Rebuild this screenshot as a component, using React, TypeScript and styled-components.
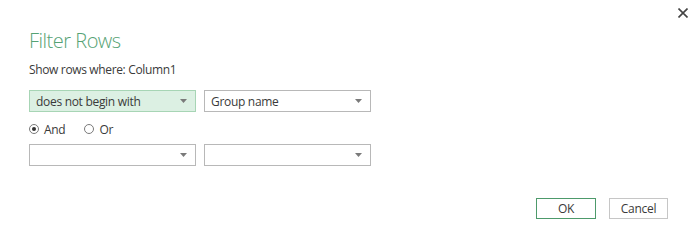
import styled, { createGlobalStyle } from 'styled-components';

const GlobalStyle = createGlobalStyle`
	html, body {
		margin: 0;
		padding: 0;
		background: #ffffff;
	}
	body {
		font-family: 'Open Sans', 'Noto Sans', sans-serif;
		color: #333333;
	}
`;

const Arrow = () => (
	<svg width="7" height="4" viewBox="0 0 7 4">
		<path d="M0 0 L7 0 L3.5 4 Z" fill="#7a7a7a" />
	</svg>
);

const Select = (props: { value?: string; active?: boolean }) => (
	<SelectBox $active={!!props.active}>
		<SelectText>{props.value}</SelectText>
		<Arrow />
	</SelectBox>
);

const Radio = (props: { label: string; checked?: boolean }) => (
	<RadioLabel>
		<RadioCircle>{props.checked && <RadioDot />}</RadioCircle>
		{props.label}
	</RadioLabel>
);

const App = () => {
	return (
		<Dialog>
			<GlobalStyle />
			<CloseButton aria-label="Close">
				<svg width="10" height="10" viewBox="0 0 10 10">
					<path d="M0.5 0.5 L9.5 9.5 M9.5 0.5 L0.5 9.5" stroke="#444" strokeWidth="1.6" />
				</svg>
			</CloseButton>
			<Title>Filter Rows</Title>
			<Subtitle>Show rows where: Column1</Subtitle>
			<Row $top={12}>
				<Select value="does not begin with" active />
				<Select value="Group name" />
			</Row>
			<RadioRow>
				<Radio label="And" checked />
				<Radio label="Or" />
			</RadioRow>
			<Row $top={0}>
				<Select />
				<Select />
			</Row>
			<Footer>
				<Button $primary>OK</Button>
				<Button>Cancel</Button>
			</Footer>
		</Dialog>
	);
};

export default App;

const Dialog = styled.div`
	position: relative;
	box-sizing: border-box;
	width: 699px;
	height: 249px;
	padding: 29px 31px 0 29px;
	display: flex;
	flex-direction: column;
`;

const CloseButton = styled.div`
	position: absolute;
	top: 8px;
	right: 11px;
	width: 10px;
	height: 10px;
	display: flex;
`;

const Title = styled.div`
	font-size: 20px;
	line-height: 24px;
	font-weight: 300;
	color: #55a274;
	letter-spacing: -0.5px;
`;

const Subtitle = styled.div`
	margin-top: 9px;
	font-size: 12px;
	line-height: 16px;
	color: #3a3a3a;
	letter-spacing: -0.35px;
`;

const Row = styled.div<{ $top: number }>`
	display: flex;
	gap: 8px;
	margin-top: ${(p) => p.$top}px;
`;

const SelectBox = styled.div<{ $active: boolean }>`
	box-sizing: border-box;
	width: 167px;
	height: 22px;
	display: flex;
	align-items: center;
	justify-content: space-between;
	padding: 0 8px 0 6px;
	border: 1px solid ${(p) => (p.$active ? '#a7d5b5' : '#b8b8b8')};
	background: ${(p) => (p.$active ? '#dcf0e3' : '#ffffff')};
`;

const SelectText = styled.span`
	font-size: 12px;
	color: #3a3a3a;
	letter-spacing: -0.3px;
	white-space: nowrap;
`;

const RadioRow = styled.div`
	display: flex;
	gap: 19px;
	margin-top: 8px;
	margin-bottom: 6px;
	height: 18px;
	align-items: center;
`;

const RadioLabel = styled.label`
	display: flex;
	align-items: center;
	gap: 5px;
	font-size: 12px;
	color: #3a3a3a;
	letter-spacing: -0.3px;
`;

const RadioCircle = styled.span`
	box-sizing: border-box;
	width: 10px;
	height: 10px;
	border: 1px solid #7a7a7a;
	border-radius: 50%;
	display: flex;
	align-items: center;
	justify-content: center;
`;

const RadioDot = styled.span`
	width: 4px;
	height: 4px;
	border-radius: 50%;
	background: #333333;
`;

const Footer = styled.div`
	margin-top: auto;
	margin-bottom: 30px;
	display: flex;
	justify-content: flex-end;
	gap: 13px;
`;

const Button = styled.div<{ $primary?: boolean }>`
	box-sizing: border-box;
	width: ${(p) => (p.$primary ? '60px' : '59px')};
	height: 21px;
	display: flex;
	align-items: center;
	justify-content: center;
	font-size: 12px;
	color: #3a3a3a;
	background: #ffffff;
	border: 1px solid ${(p) => (p.$primary ? '#4d9a6b' : '#c6c6c6')};
	letter-spacing: -0.3px;
`;
